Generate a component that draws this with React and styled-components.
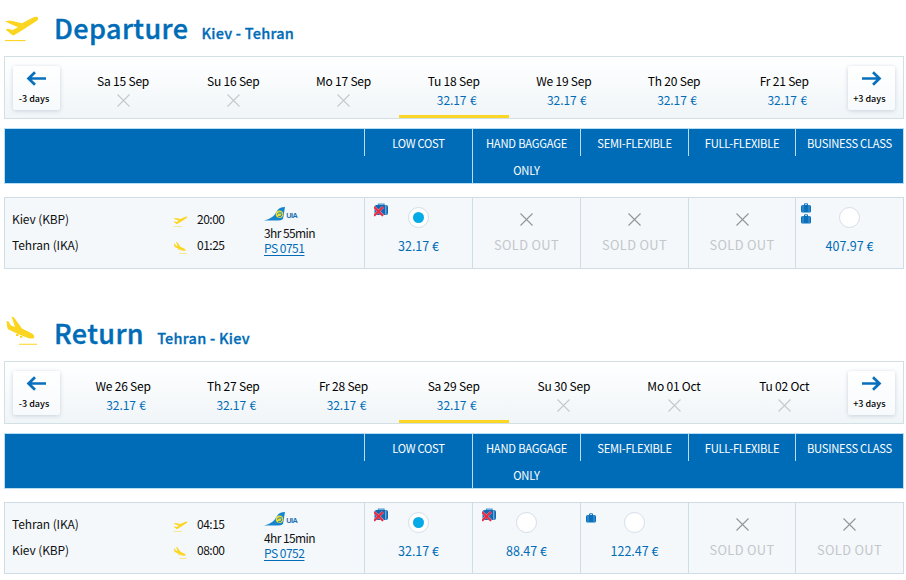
import React from "react";
import styled, { createGlobalStyle } from "styled-components";

const Global = createGlobalStyle`
  * { box-sizing: border-box; }
  html, body { margin: 0; background: #fff; }
  body {
    width: 906px; height: 580px; overflow: hidden;
    font-family: "Noto Sans CJK SC", "Open Sans", sans-serif;
    font-size: 12.5px; line-height: 16px; color: #111;
  }
  svg { display: block; }
`;
const Page = styled.main`width: 900px; height: 580px; overflow: hidden; margin-left: 4px; display: grid; grid-template-rows: 275px 275px; row-gap: 30px;`;
const Section = styled.section`height: 275px;`;
const Heading = styled.header`display: flex; height: 56px; align-items: flex-start; color: #006cb7; white-space: nowrap;`;
const PlaneSlot = styled.div`width: 50px; flex: none; padding-top: ${(p) => (p.$landing ? 10 : 16)}px;`;
const Title = styled.h1`
  margin: 0; font-size: 27px; line-height: 36px; font-weight: 500; padding-top: 10px;
  letter-spacing: .4px; -webkit-text-stroke: .4px #006cb7;
`;
const Route = styled.h2`
  margin: 0 0 0 13px; font-size: 14.5px; line-height: 20px; font-weight: 500; padding-top: 23px;
  letter-spacing: .25px; -webkit-text-stroke: .3px #006cb7;
`;
const DateBar = styled.nav`
  display: flex; height: 63px; border: 1px solid #d2dfe3;
  background: linear-gradient(#fff, #f0f5f8);
`;
const ShiftButton = styled.button`
  width: 47px; height: 44px; margin: ${(p) => (p.$next ? "9px 0 0 9px" : "9px 8px 0 8px")}; padding: 5px 0 0;
  display: flex; flex-direction: column; align-items: center; flex: none;
  border: 0; border-radius: 3px; background: linear-gradient(#fff, #f7fafc);
  box-shadow: 0 1px 4px #c9d2dc; color: #000;
  font: 500 9px/12px "Noto Sans CJK SC", sans-serif; white-space: nowrap;
  svg { margin-right: 1px; }
  span { margin: 7px 5px 0 0; }
`;
const Day = styled.div`
  width: 110.2px; flex: none; text-align: center; padding: 16px 0 0; color: #000;
  font-size: 12px; letter-spacing: -.2px;
  border-bottom: ${(p) => (p.$active ? "3px solid #fbd624" : "0")};
  svg { margin: 5px auto 0; }
`;
const DayPrice = styled.div`margin-top: 3px; padding-left: 6px; color: #006cb7; font-size: 12px; letter-spacing: -.1px; word-spacing: 1px;`;
const Columns = styled.div`display: grid; grid-template-columns: 359px 108px 108px 108px 107px 1fr;`;
const FareHead = styled(Columns)`
  height: 56px; margin-top: 9px; background: #006cb7; border: 1px solid #b9def3; color: #fff;
  font-size: 11.2px; line-height: 28px; text-align: center; letter-spacing: -.28px;
`;
const FareName = styled.div`
  height: ${(p) => (p.$tall ? 54 : 27)}px; border-left: 1px solid #b9def3; line-height: ${(p) => (p.$tall ? 27 : 28)}px;
  padding-top: ${(p) => (p.$tall ? 0.5 : 0)}px; letter-spacing: ${(p) => (p.$tall ? -0.2 : -0.28)}px;
`;
const FlightRow = styled(Columns)`height: 72px; margin-top: 13px; background: #f4f8fb; border: 1px solid #d0dde6;`;
const Info = styled.div`display: grid; grid-template-columns: 161px 91px 1fr; padding-left: 7px; font-size: 12px; letter-spacing: -.1px;`;
const Stack = styled.div`padding-top: 8px; line-height: 26px;`;
const TimeLine = styled.div`
  display: flex; height: 26px; align-items: center; letter-spacing: -.5px;
  svg { margin: 4px 9px 0 0; }
`;
const Carrier = styled.div`line-height: 15px; letter-spacing: -.6px; svg { margin: 9px 0 3px; }`;
const FlightLink = styled.a`display: block; color: #006cb7; text-decoration: underline; text-underline-offset: 2px; letter-spacing: -.5px;`;
const Fare = styled.div`position: relative; border-left: 1px solid #d0dde6; text-align: center; padding-top: 9px; color: #006cb7;`;
const Radio = styled.div`
  width: 21px; height: 21px; margin: 0 auto; border: 1px solid #d5dde8; border-radius: 50%;
  background: #fff; display: grid; place-items: center;
  &::after { content: ""; width: 11px; height: 11px; border-radius: 50%; background: ${(p) => (p.$on ? "#05aae6" : "transparent")}; }
`;
const FarePrice = styled.div`margin-top: 10px;`;
const SoldOut = styled.div`
  padding-top: 6px; color: #c3c7ca; font-size: 12.8px; letter-spacing: .35px;
  svg { margin: 0 auto 11px; }
`;
const Bags = styled.div`position: absolute; left: ${(p) => (p.$crossed ? 9 : 5)}px; top: ${(p) => p.$top}px; display: grid; gap: 1px;`;

const Plane = ({ landing, small }) => {
  const w = small ? 15 : 36;
  const h = small ? (landing ? 13 : 11) : landing ? 31 : 26;
  return (
    <svg width={w} height={h} viewBox={landing ? "0 0 36 31" : "0 0 36 26"} fill="#fbd51f">
      {landing ? (
        <>
          <path d="M7.5 1.5L10 2.5L18 13.5L28 18.5Q31 20.5 30 23Q27.5 24 24 23L13 18.5L4.5 14.5Q3 13 3 10.5L2.5 6L4.5 6.5L7 10.5L11 12Z" />
          <path d="M12 19h2.5v2H12zM16 20.8h2.5v2H16zM15 28.7h18v1.1H15z" />
        </>
      ) : (
        <>
          <path d="M1 5.5L6 4.5L18 7.2L28 2Q32 0 34 1.5Q35 4 31 6L21 12.5L10 19.2Q8 19.5 7 18L1.5 13.5L4 12.8L8.5 14L14 11.3Z" />
          <path d="M1 24h20.5v1.1H1z" />
        </>
      )}
    </svg>
  );
};
const Arrow = ({ right }) => (
  <svg width="21" height="15" viewBox="0 0 21 15" fill="none" stroke="#0870bc" strokeWidth="2.7">
    <path d={right ? "M1 7.5H18.5M12 1.2L18.5 7.5L12 13.8" : "M20 7.5H2.5M9 1.2L2.5 7.5L9 13.8"} />
  </svg>
);
const Cross = ({ dark }) => (
  <svg width="13" height="13" viewBox="0 0 13 13" stroke={dark ? "#8f9699" : "#c4c9cb"} strokeWidth="1.1">
    <path d="M.5 .5L12.5 12.5M12.5 .5L.5 12.5" />
  </svg>
);
const Bag = ({ crossed }) =>
  crossed ? (
    <svg width="15" height="14" viewBox="0 0 15 14">
      <path d="M4.5 3V1.2H10V3" fill="none" stroke="#4696cf" strokeWidth="1.3" />
      <rect x=".5" y="2" width="13.5" height="10" rx="2" fill="#1268b3" />
      <path d="M11.8 2.3v9.5" stroke="#8fc3e6" />
      <path d="M0 4L9 12.5M9 4L0 12.5" stroke="#f3a3b0" strokeWidth="3" opacity=".75" />
      <path d="M0 4L9 12.8M9 4L0 12.8" stroke="#ef263d" strokeWidth="1.8" />
    </svg>
  ) : (
    <svg width="10" height="10" viewBox="0 0 10 10">
      <path d="M3.5 2V.8H6.5V2" fill="none" stroke="#1774bb" />
      <rect y="2" width="10" height="7.5" rx="1.5" fill="#0870bc" />
      <path d="M2 2v7.5M8 2v7.5" stroke="#70afda" strokeWidth=".7" />
    </svg>
  );
const Logo = () => (
  <svg width="36" height="15" viewBox="0 0 36 15">
    <path d="M0 13.5Q9 12 13 4Q15 0 21 0L19 12Q17 13.5 14 13.5Z" fill="#1685cd" />
    <circle cx="15.5" cy="7.3" r="3.7" fill="#e8dc3a" />
    <path d="M13 7.5Q14 5 18 6M14 10Q18 10 18 7" fill="none" stroke="#197cab" />
    <text x="22.3" y="10.5" fontSize="7.3" fontWeight="700" fontFamily="Liberation Sans, sans-serif" fill="#1c6fb3">UIA</text>
  </svg>
);

const names = ["LOW COST", "HAND BAGGAGE ONLY", "SEMI-FLEXIBLE", "FULL-FLEXIBLE", "BUSINESS CLASS"];
const trips = [
  {
    title: "Departure", route: "Kiev - Tehran", from: "Kiev (KBP)", to: "Tehran (IKA)", dep: "20:00", arr: "01:25", time: "3hr 55min", no: "PS 0751",
    days: [["Sa 15 Sep"], ["Su 16 Sep"], ["Mo 17 Sep"], ["Tu 18 Sep", 1], ["We 19 Sep", 1], ["Th 20 Sep", 1], ["Fr 21 Sep", 1]],
    fares: [{ price: "32.17 €", on: true, bag: "crossed" }, null, null, null, { price: "407.97 €", bag: "double" }],
  },
  {
    title: "Return", route: "Tehran - Kiev", landing: true, from: "Tehran (IKA)", to: "Kiev (KBP)", dep: "04:15", arr: "08:00", time: "4hr 15min", no: "PS 0752",
    days: [["We 26 Sep", 1], ["Th 27 Sep", 1], ["Fr 28 Sep", 1], ["Sa 29 Sep", 1], ["Su 30 Sep"], ["Mo 01 Oct"], ["Tu 02 Oct"]],
    fares: [{ price: "32.17 €", on: true, bag: "crossed" }, { price: "88.47 €", bag: "crossed" }, { price: "122.47 €", bag: "single" }, null, null],
  },
];

const FareCell = ({ fare }) => (
  <Fare>
    {fare ? (
      <>
        <Bags $crossed={fare.bag === "crossed"} $top={fare.bag === "single" ? 10 : 5}>
          <Bag crossed={fare.bag === "crossed"} />
          {fare.bag === "double" && <Bag />}
        </Bags>
        <Radio $on={fare.on} />
        <FarePrice>{fare.price}</FarePrice>
      </>
    ) : (
      <SoldOut><Cross dark />SOLD OUT</SoldOut>
    )}
  </Fare>
);

const Trip = ({ t }) => (
  <Section>
    <Heading>
      <PlaneSlot $landing={t.landing}><Plane landing={t.landing} /></PlaneSlot>
      <Title>{t.title}</Title>
      <Route>{t.route}</Route>
    </Heading>
    <DateBar>
      <ShiftButton><Arrow /><span>-3 days</span></ShiftButton>
      {t.days.map(([label, price], i) => (
        <Day key={label} $active={i === 3}>{label}{price ? <DayPrice>32.17 €</DayPrice> : <Cross />}</Day>
      ))}
      <ShiftButton $next><Arrow right /><span>+3 days</span></ShiftButton>
    </DateBar>
    <FareHead>
      <div />
      {names.map((n, i) => <FareName key={n} $tall={i === 1}>{n}</FareName>)}
    </FareHead>
    <FlightRow>
      <Info>
        <Stack><div>{t.from}</div><div>{t.to}</div></Stack>
        <Stack>
          <TimeLine><Plane small />{t.dep}</TimeLine>
          <TimeLine><Plane small landing />{t.arr}</TimeLine>
        </Stack>
        <Carrier><Logo />{t.time}<FlightLink>{t.no}</FlightLink></Carrier>
      </Info>
      {t.fares.map((f, i) => <FareCell key={i} fare={f} />)}
    </FlightRow>
  </Section>
);

export default function App() {
  return <><Global /><Page>{trips.map((t) => <Trip key={t.title} t={t} />)}</Page></>;
}
